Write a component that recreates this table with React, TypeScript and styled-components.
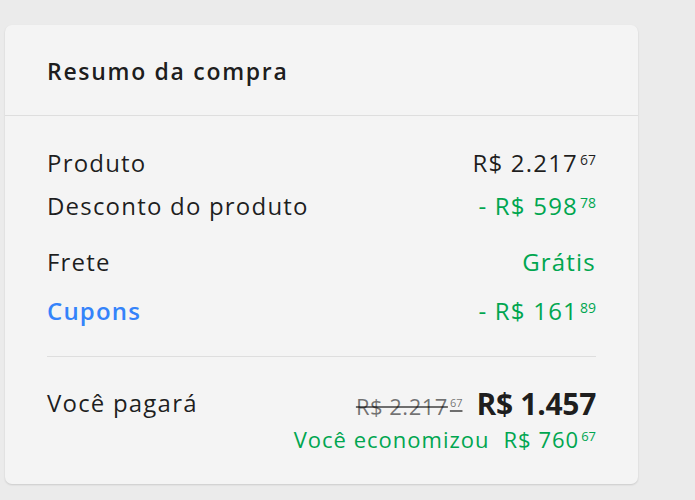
import React from "react"
import styled, { createGlobalStyle } from "styled-components"

const GlobalStyle = createGlobalStyle`
  html, body {
    margin: 0;
    padding: 0;
    background: #ebebeb;
  }
  body {
    font-family: "Open Sans", "Liberation Sans", sans-serif;
    color: rgba(0, 0, 0, 0.88);
  }
`

const Page = styled.div`
  padding: 25px 57px 16px 5px;
`

const Card = styled.section`
  width: 633px;
  height: 459px;
  box-sizing: border-box;
  background: #f4f4f4;
  border-radius: 7px;
  box-shadow: 0 1px 2px rgba(0, 0, 0, 0.14);
  display: flex;
  flex-direction: column;
`

const Header = styled.header`
  height: 91px;
  box-sizing: border-box;
  display: flex;
  align-items: center;
  padding: 2px 42px 0;
  border-bottom: 1px solid #dedede;
`

const Title = styled.h2`
  margin: 0;
  font-size: 23px;
  font-weight: 600;
  letter-spacing: 1.7px;
  color: rgba(0, 0, 0, 0.9);
`

const Body = styled.div`
  padding: 30px 42px 0;
`

const Row = styled.div<{ $gap?: number }>`
  display: flex;
  justify-content: space-between;
  align-items: baseline;
  margin-top: ${({ $gap }) => $gap ?? 0}px;
  font-size: 24px;
  line-height: 34px;
  letter-spacing: 1.2px;
`

const Label = styled.span<{ $link?: boolean }>`
  color: ${({ $link }) => ($link ? "#3483fa" : "rgba(0, 0, 0, 0.88)")};
  font-weight: ${({ $link }) => ($link ? 600 : 400)};
`

const Amount = styled.span<{ $green?: boolean }>`
  color: ${({ $green }) => ($green ? "#00a650" : "rgba(0, 0, 0, 0.88)")};
  font-weight: ${({ $green }) => ($green ? 500 : 400)};
  white-space: nowrap;
`

const Cents = styled.span<{ $size?: number; $lift?: number }>`
  font-size: ${({ $size }) => $size ?? 14}px;
  line-height: 1;
  position: relative;
  top: -${({ $lift }) => $lift ?? 7}px;
  margin-left: 2px;
  letter-spacing: 0;
`

const Divider = styled.hr`
  border: 0;
  border-top: 1px solid #dedede;
  margin: 28px 0 0;
`

const TotalRow = styled.div`
  display: flex;
  justify-content: space-between;
  align-items: flex-start;
  margin-top: 29px;
`

const TotalLabel = styled.span`
  font-size: 24px;
  line-height: 34px;
  letter-spacing: 1.2px;
`

const TotalRight = styled.div`
  display: flex;
  flex-direction: column;
  align-items: flex-end;
`

const Prices = styled.div`
  display: flex;
  align-items: baseline;
  gap: 14px;
  line-height: 36px;
`

const OldPrice = styled.s`
  font-size: 22px;
  letter-spacing: 0.5px;
  color: rgba(0, 0, 0, 0.55);
`

const NewPrice = styled.span`
  font-size: 30px;
  font-weight: 700;
  letter-spacing: -0.3px;
`

const Savings = styled.div`
  display: flex;
  gap: 14px;
  color: #00a650;
  font-size: 22px;
  line-height: 30px;
  letter-spacing: 1px;
`

const Price: React.FC<{ value: string; cents: string; green?: boolean; minus?: boolean }> = ({
  value,
  cents,
  green,
  minus,
}) => (
  <Amount $green={green}>
    {minus ? "- " : ""}R$ {value}
    <Cents>{cents}</Cents>
  </Amount>
)

export default function App() {
  return (
    <>
      <GlobalStyle />
      <Page>
        <Card>
          <Header>
            <Title>Resumo da compra</Title>
          </Header>
          <Body>
            <Row>
              <Label>Produto</Label>
              <Price value="2.217" cents="67" />
            </Row>
            <Row $gap={9}>
              <Label>Desconto do produto</Label>
              <Price value="598" cents="78" green minus />
            </Row>
            <Row $gap={22}>
              <Label>Frete</Label>
              <Amount $green>Grátis</Amount>
            </Row>
            <Row $gap={15}>
              <Label $link>Cupons</Label>
              <Price value="161" cents="89" green minus />
            </Row>
            <Divider />
            <TotalRow>
              <TotalLabel>Você pagará</TotalLabel>
              <TotalRight>
                <Prices>
                  <OldPrice>
                    R$ 2.217<Cents $size={11} $lift={8}>67</Cents>
                  </OldPrice>
                  <NewPrice>R$ 1.457</NewPrice>
                </Prices>
                <Savings>
                  <span>Você economizou</span>
                  <span>
                    R$ 760<Cents $size={13} $lift={7}>67</Cents>
                  </span>
                </Savings>
              </TotalRight>
            </TotalRow>
          </Body>
        </Card>
      </Page>
    </>
  )
}
